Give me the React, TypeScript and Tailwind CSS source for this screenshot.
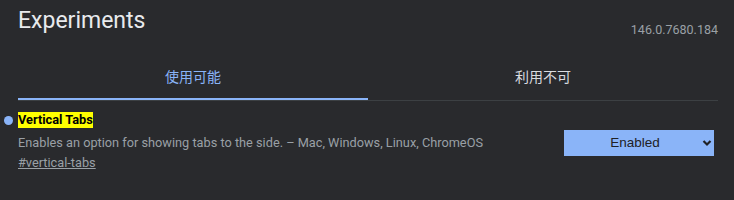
import React from "react";

export default function App() {
  return (
    <div
      className="w-[734px] h-[200px] bg-[#292a2d] overflow-hidden text-[#e8eaed]"
      style={{ fontFamily: 'Roboto, "Noto Sans CJK JP", sans-serif' }}
    >
      <div className="px-[18px] pr-[16px]">
        <div className="flex items-end justify-between h-[40px]">
          <h1 className="text-[23px] leading-[24px] font-normal text-[#e8eaed] pb-[7px]">Experiments</h1>
          <span className="text-[12.5px] leading-[13px] text-[#9aa0a6] pb-[4px]">146.0.7680.184</span>
        </div>
        <div className="flex mt-[20px] border-b border-[#3c4043]">
          <div className="flex-1 flex flex-col items-center">
            <span className="text-[14px] leading-[18px] text-[#8ab4f8] mt-[8px] mb-[12px]">使用可能</span>
            <div className="h-[2px] w-full bg-[#8ab4f8]" />
          </div>
          <div className="flex-1 flex flex-col items-center">
            <span className="text-[14px] leading-[18px] text-[#dadce0] mt-[8px] mb-[14px]">利用不可</span>
          </div>
        </div>
      </div>
      <div className="relative px-[18px] pr-[20px] mt-[11px] flex items-start justify-between">
        <span className="absolute left-[4px] top-[4px] w-[9px] h-[9px] rounded-full bg-[#8ab4f8]" />
        <div className="flex flex-col">
          <div className="h-[16px] flex items-center">
            <span className="bg-[#ffff00] text-black font-bold text-[12.75px] leading-[16px]">Vertical Tabs</span>
          </div>
          <p className="text-[12.75px] leading-[20px] mt-[5px] text-[#9aa0a6]">
            Enables an option for showing tabs to the side. – Mac, Windows, Linux, ChromeOS
          </p>
          <a className="text-[12.75px] leading-[20px] text-[#9aa0a6] underline">#vertical-tabs</a>
        </div>
        <div className="mt-[18px] w-[150px] h-[26px] bg-[#8ab4f8] flex items-center relative shrink-0">
          <span
            className="flex-1 text-center text-[13.5px] text-[#202124] pr-[8px]"
            style={{ fontFamily: '"Liberation Sans", Arial, sans-serif' }}
          >
            Enabled
          </span>
          <svg className="absolute right-[2px] top-[9px]" width="10" height="8" viewBox="0 0 10 8">
            <path d="M1.5 2 L5 5.5 L8.5 2" stroke="#202124" strokeWidth="2.2" fill="none" />
          </svg>
        </div>
      </div>
    </div>
  );
}
